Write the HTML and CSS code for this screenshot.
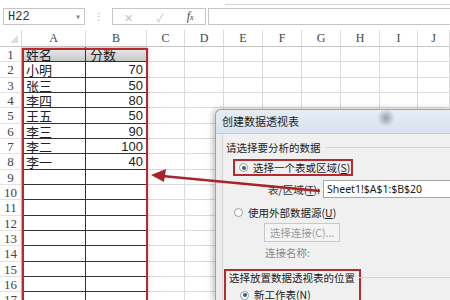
FILE: index.html
```html
<!DOCTYPE html>
<html lang="zh-CN">
<head>
    <meta charset="UTF-8">
    <title>创建数据透视表</title>
    <link rel="stylesheet" href="styles.css">
</head>
<body>
    <div class="toolbar">
        <div class="namebox"><span>H22</span><span class="caret">▾</span></div>
        <div class="grip">⋮</div>
        <div class="fxgroup">
            <span class="x">✕</span>
            <span class="ok">✓</span>
            <span class="fx">f<small>x</small></span>
        </div>
        <div class="formula"></div>
    </div>

    <div class="sheet" id="sheet">
        <!-- cells are added by the script below -->
    </div>

    <!-- red box drawn round the source table -->
    <div class="frame"></div>

    <div class="dialog">
        <div class="title">创建数据透视表</div>
        <div class="panel">
            <div class="group">请选择要分析的数据</div>
            <div class="radio-row mark">
                <span class="radio on"></span>选择一个表或区域(<u>S</u>)
            </div>
            <div class="range-row">
                <span class="range-label">表/区域(<u>T</u>):</span>
                <div class="input">Sheet1!$A$1:$B$20</div>
            </div>
            <div class="radio-row">
                <span class="radio"></span>使用外部数据源(<u>U</u>)
            </div>
            <div class="btn">选择连接(C)...</div>
            <div class="conn">连接名称:</div>
            <div class="place">
                <div class="group">选择放置数据透视表的位置</div>
                <div class="radio-row">
                    <span class="radio on"></span>新工作表(<u>N</u>)
                </div>
            </div>
        </div>
    </div>

    <svg class="arrow" width="450" height="300" viewBox="0 0 450 300">
        <path d="M320 191 L162 176" stroke="#a8232b" stroke-width="2.5" fill="none"/>
        <polygon points="151,175 166,169 164,182" fill="#a8232b"/>
    </svg>

    <script>
        const cols = ['', 'A', 'B', 'C', 'D', 'E', 'F', 'G', 'H', 'I', 'J'];
        const data = [
            ['姓名', '分数'],
            ['小明', '70'],
            ['张三', '50'],
            ['李四', '80'],
            ['王五', '50'],
            ['李三', '90'],
            ['李二', '100'],
            ['李一', '40']
        ];
        const sheet = document.getElementById('sheet');

        function addCell(cls, text) {
            const cell = document.createElement('div');
            cell.className = cls;
            cell.textContent = text || '';
            sheet.appendChild(cell);
        }

        cols.forEach((c, i) => addCell(i === 0 ? 'ch corner' : 'ch', c));

        for (let r = 1; r <= 17; r++) {
            const row = data[r - 1] || ['', ''];
            const head = r === 1 ? ' th' : '';
            addCell('rh', r);
            addCell('cell tb ta' + head, row[0]);
            addCell('cell tb' + (r === 1 ? '' : ' num') + head, row[1]);
            for (let c = 3; c < cols.length; c++) addCell('cell');
        }
    </script>
</body>
</html>
```

FILE: styles.css
```css
body {
    margin: 0;
    width: 450px;
    height: 300px;
    overflow: hidden;
    background: #fff;
    position: relative;
    font-family: "Noto Sans CJK SC", "Noto Sans", sans-serif;
    color: #222;
}

/* Formula bar */
.toolbar {
    display: flex;
    height: 30px;
    padding: 8px 0 0 3px;
    box-sizing: border-box;
    position: relative;
}

.toolbar::before {
    content: "";
    position: absolute;
    left: 225px;
    right: 0;
    top: 4px;
    border-top: 1px solid #d4d4d4;
}

.namebox {
    width: 82px;
    height: 17px;
    box-sizing: border-box;
    border: 1px solid #c6c6c6;
    display: flex;
    justify-content: space-between;
    align-items: center;
    padding: 0 3px 0 4px;
    font-family: "Liberation Mono", monospace;
    font-size: 12px;
    color: #333;
}

.caret {
    color: #888;
    font-size: 10px;
}

.grip {
    width: 27px;
    text-align: center;
    color: #aaa;
    font-size: 11px;
    line-height: 17px;
}

.fxgroup {
    width: 94px;
    height: 17px;
    box-sizing: border-box;
    border: 1px solid #c6c6c6;
    display: flex;
    align-items: center;
    justify-content: space-around;
    color: #c4c4c4;
    font-size: 11px;
}

.fxgroup .fx {
    color: #444;
    font-family: "Liberation Serif", serif;
    font-style: italic;
    font-size: 12px;
}

.fxgroup small {
    font-size: 8px;
}

.formula {
    flex: 1;
    height: 17px;
    margin-left: 2px;
    box-sizing: border-box;
    border: 1px solid #c6c6c6;
    border-right: none;
}

/* Sheet grid */
.sheet {
    display: grid;
    grid-template-columns: 22px 64px 61px 38px 39px 39px 39px 39px 39px 38px 32px;
    grid-template-rows: 17px;
    grid-auto-rows: 15.33px;
    height: 270px;
    overflow: hidden;
}

.sheet > div {
    box-sizing: border-box;
    white-space: nowrap;
}

.ch {
    border-right: 1px solid #dcdcdc;
    border-bottom: 1px solid #c6c6c6;
    text-align: center;
    font-family: "Liberation Serif", serif;
    font-size: 12px;
    line-height: 17px;
    color: #444;
}

.corner {
    position: relative;
}

.corner::after {
    content: "";
    position: absolute;
    right: 3px;
    bottom: 3px;
    border-left: 8px solid transparent;
    border-bottom: 8px solid #dcdcdc;
}

.rh {
    border-right: 1px solid #c6c6c6;
    border-bottom: 1px solid #e2e2e2;
    text-align: center;
    font-family: "Liberation Serif", serif;
    font-size: 13px;
    line-height: 15px;
    color: #444;
}

.cell {
    border-right: 1px solid #dadada;
    border-bottom: 1px solid #dadada;
    font-size: 13px;
    line-height: 15px;
    padding: 0 3px 0 4px;
}

.tb {
    border-bottom-color: #333;
}

.ta {
    border-right-color: #333;
}

.num {
    text-align: right;
    font-family: "Liberation Sans", sans-serif;
}

.th {
    background: linear-gradient(#ececec, #c9c9c9);
}

.frame {
    position: absolute;
    left: 22px;
    top: 48px;
    width: 126px;
    height: 252px;
    box-sizing: border-box;
    border: 2px solid #b52a2f;
    border-bottom: none;
    box-shadow: 0 0 3px rgba(180, 40, 40, 0.35);
}

/* Dialog window */
.dialog {
    position: absolute;
    left: 215px;
    top: 109px;
    width: 235px;
    height: 191px;
    overflow: hidden;
    border: 1px solid #97a6b6;
    border-right: none;
    border-bottom: none;
    border-radius: 6px 0 0 0;
    background: #ececec;
    box-shadow: -2px 0 6px rgba(0, 0, 0, 0.25);
    font-size: 10.5px;
}

.title {
    height: 23px;
    line-height: 23px;
    padding-left: 6px;
    border-radius: 6px 0 0 0;
    border-bottom: 1px solid #c3cbd4;
    background:
        radial-gradient(circle at 170px 8px, rgba(60, 70, 90, 0.45), transparent 9px),
        linear-gradient(#e6edf4, #d9e3ee);
    font-size: 11px;
}

.panel {
    margin-left: 6px;
    padding: 4px 0 0 3px;
    height: 170px;
    border-left: 1px solid #d6d6d6;
    background: #f0f0f0;
}

.group {
    display: flex;
    align-items: center;
    height: 18px;
    gap: 4px;
}

.group::after {
    content: "";
    flex: 1;
    border-top: 1px solid #d6d6d6;
}

.radio-row {
    display: flex;
    align-items: center;
    height: 16px;
    margin: 4px 0 0 8px;
}

.radio {
    width: 9px;
    height: 9px;
    box-sizing: border-box;
    border: 1px solid #9a9a9a;
    border-radius: 50%;
    background: #fff;
    margin-right: 5px;
    position: relative;
}

.radio.on::after {
    content: "";
    position: absolute;
    left: 1.5px;
    top: 1.5px;
    width: 4px;
    height: 4px;
    border-radius: 50%;
    background: #2d5f8a;
}

.mark {
    width: 120px;
    height: 17px;
    box-sizing: border-box;
    border: 2px solid #b52a2f;
    margin: 3px 0 0 7px;
    padding-left: 4px;
}

.range-row {
    display: flex;
    align-items: center;
    height: 18px;
    margin-top: 4px;
}

.range-label {
    width: 94px;
    text-align: right;
    padding-right: 3px;
    color: #333;
}

.input {
    flex: 1;
    height: 18px;
    box-sizing: border-box;
    border: 1px solid #a6a6a6;
    border-right: none;
    background: #fff;
    padding-left: 3px;
    line-height: 16px;
    font-family: "Noto Sans", sans-serif;
    font-size: 10.5px;
}

.range-row + .radio-row {
    margin-top: 6px;
}

.btn {
    width: 76px;
    height: 19px;
    box-sizing: border-box;
    margin: 3px 0 0 38px;
    border: 1px solid #c8c8c8;
    background: #f4f4f4;
    color: #9a9a9a;
    text-align: center;
    line-height: 17px;
}

.conn {
    height: 16px;
    line-height: 16px;
    margin: 3px 0 0 39px;
    color: #8a8a8a;
}

.place {
    width: 137px;
    height: 32px;
    box-sizing: border-box;
    margin: 8px 0 0 -2px;
    border: 2px solid #b52a2f;
    border-bottom: none;
    padding: 0 0 0 3px;
}

.place .group {
    height: 13px;
    width: 240px;
}

.place .radio-row {
    margin-top: 5px;
    margin-left: 11px;
    height: 12px;
    line-height: 12px;
}

.arrow {
    position: absolute;
    left: 0;
    top: 0;
    pointer-events: none;
}
```
